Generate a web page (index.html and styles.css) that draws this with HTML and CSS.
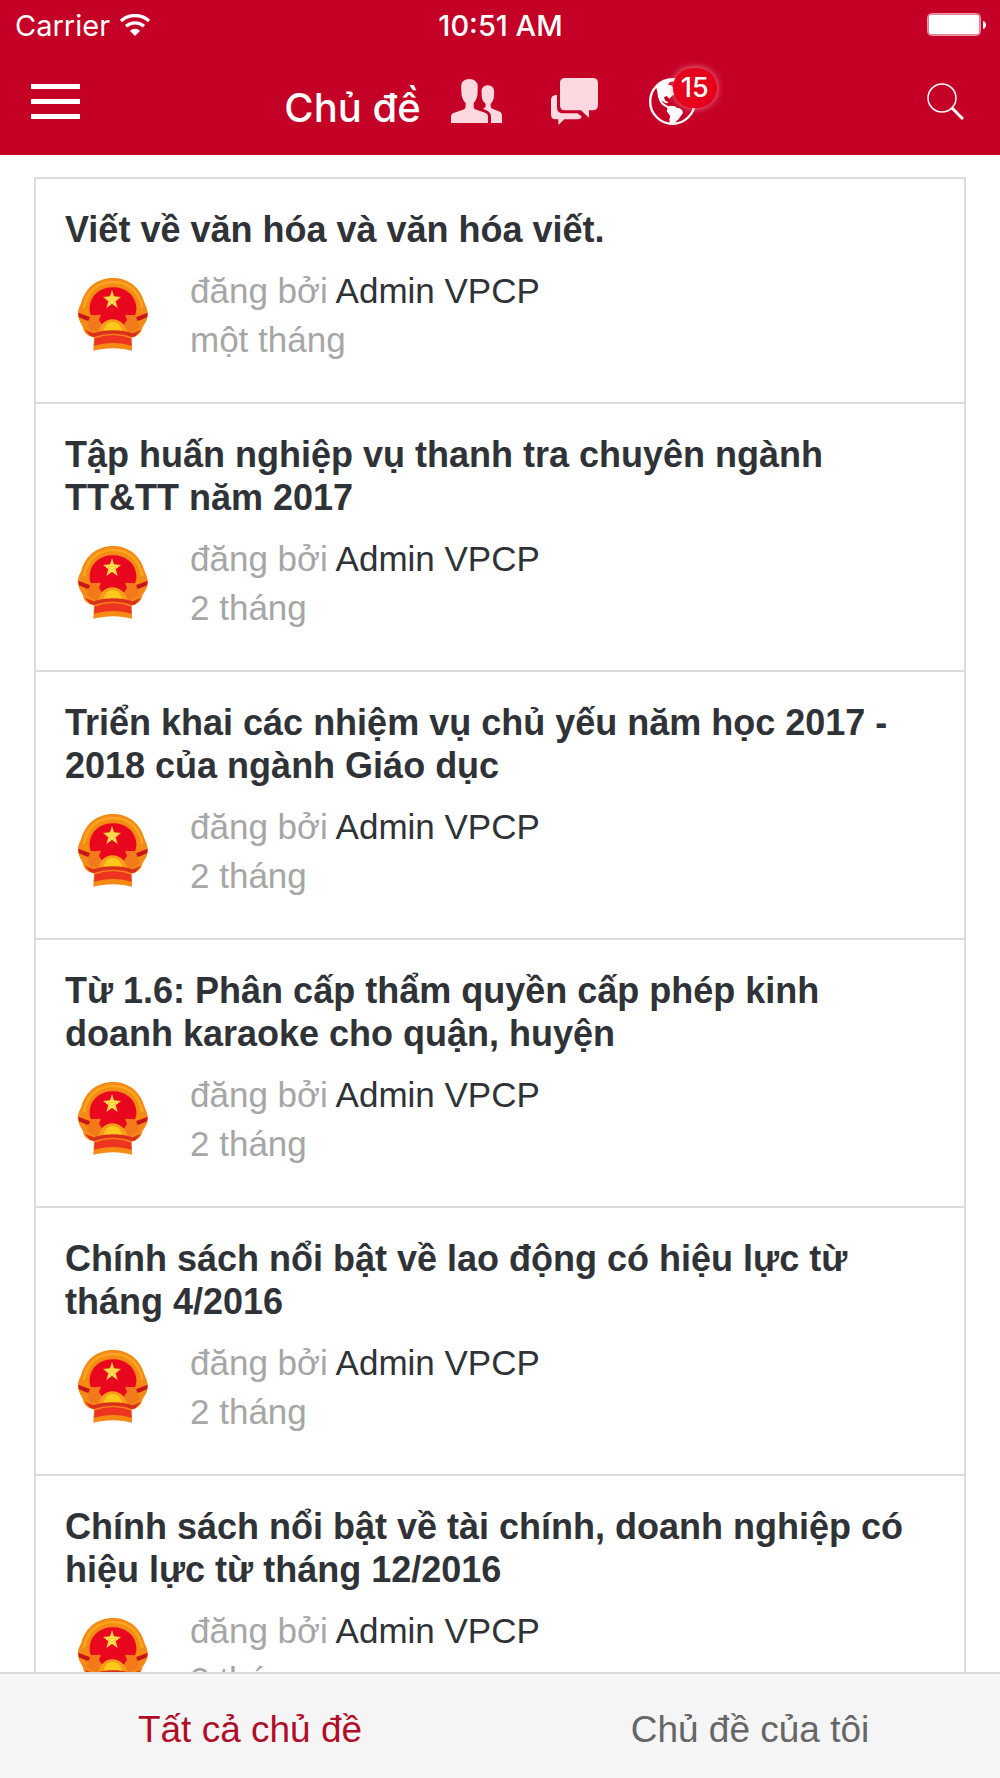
FILE: index.html
```
<!DOCTYPE html>
<html lang="vi">
<head>
    <meta charset="UTF-8">
    <meta name="viewport" content="width=device-width, initial-scale=1.0">
    <title>Chủ đề</title>
    <link rel="stylesheet" href="styles.css">
</head>
<body>

    <!-- Emblem shared by all avatars -->
    <svg width="0" height="0" class="defs" aria-hidden="true">
        <symbol id="emblem" viewBox="18 30 264 288">
            <path fill="#f58a14" d="M162 66C112 66 78 98 67 140C58 156 54 172 58 184C61 198 68 204 72 214C74 230 84 240 105 244L103 284C140 274 184 274 219 284L218 244C238 240 248 230 250 214C256 204 263 196 266 182C268 170 264 156 257 142C246 98 212 66 162 66Z"/>
            <path fill="none" stroke="#f9a51e" stroke-width="8" d="M74 156C84 104 118 78 162 78C206 78 240 104 250 156"/>
            <path fill="#e8071f" d="M162 94C122 94 96 118 92 152C91 162 93 170 96 178L122 180L116 206L208 206L202 180L228 178C231 170 233 162 232 152C228 118 202 94 162 94Z"/>
            <path fill="#c9141c" d="M58 170L94 184L112 180L104 192L84 194L60 184ZM266 170L230 184L212 180L220 192L240 194L264 184Z"/>
            <path fill="#f4791a" d="M94 178L126 176L120 192L130 206L112 232L84 214ZM230 178L198 176L204 192L194 206L212 232L240 214Z"/>
            <path fill="#ffd84a" d="M159 102L165 121L186 123L170 136L176 156L159 144L142 156L148 136L132 123L153 121Z"/>
            <path fill="#f99d18" d="M118 232C122 206 138 190 160 190C184 190 200 206 206 232Z"/>
            <path fill="#ffc81c" d="M134 230C136 208 146 198 160 198C176 198 186 208 190 230Z"/>
            <path fill="#d9301c" d="M78 222L104 232C136 220 188 220 220 232L246 222L228 242L217 243C180 230 142 230 106 243L94 240Z"/>
            <path fill="#ee3420" d="M108 240C142 228 180 228 216 240L218 270C184 258 140 258 105 270Z"/>
            <path fill="none" stroke="#f58a14" stroke-width="4" d="M104 246C142 232 182 232 220 246"/>
        </symbol>
    </svg>

    <header class="header">
        <div class="status-bar">
            <div class="carrier">
                <span>Carrier</span>
                <svg width="30" height="22" viewBox="0 0 90 66" aria-hidden="true">
                    <path fill="none" stroke="#fff" stroke-width="10" d="M3 21C26 -1 64 -1 87 21"/>
                    <path fill="none" stroke="#fff" stroke-width="10" d="M18 37C33 23 57 23 72 37"/>
                    <path fill="#fff" d="M30 51C38 42 52 42 60 51L45 66Z"/>
                </svg>
            </div>
            <div class="time">10:51 AM</div>
            <svg class="battery" width="59" height="24" viewBox="0 0 59 24" aria-hidden="true">
                <rect x="0.5" y="0.5" width="53" height="22" rx="4" fill="none" stroke="#ee9aa9"/>
                <rect x="1.5" y="1.5" width="51" height="20" rx="3" fill="#fff"/>
                <path fill="#fff" d="M56 8C60 9 60 15 56 16Z"/>
            </svg>
        </div>

        <div class="nav-bar">
            <button type="button" class="icon-button menu-button" aria-label="Menu">
                <span></span>
                <span></span>
                <span></span>
            </button>

            <div class="nav-center">
                <h1>Chủ đề</h1>
                <button type="button" class="icon-button people-button" aria-label="Bạn bè">
                    <svg width="51" height="44" viewBox="60 58 153 132">
                        <path fill="#fcd9e1" d="M60 190V172C60 163 66 160 76 157L96 150C102 148 104 144 104 138V130C95 122 91 110 91 94C91 82 89 72 96 65C102 60 107 58 115 58C124 58 130 61 135 66C142 73 140 82 140 94C140 110 136 122 128 130V138C128 144 130 148 136 150L156 157C168 161 171 164 171 172V190Z"/>
                        <path fill="#fcd9e1" d="M180 190V171C180 158 172 154 162 150L156 147C161 145 164 143 164 137V132C155 126 152 116 152 106C152 96 150 89 156 83C160 79 164 77 170 77C177 77 182 79 186 84C191 90 189 97 189 106C189 116 186 126 179 132V138C179 144 181 146 186 148L201 154C210 157 213 160 213 168V190Z"/>
                    </svg>
                </button>
                <button type="button" class="icon-button chat-button" aria-label="Tin nhắn">
                    <svg width="47" height="47" viewBox="360 54 141 141">
                        <path fill="#fcd9e1" d="M404 54H484C496 54 501 59 501 71V134C501 145 496 150 486 151H474V173L450 151H404C392 151 387 146 387 134V71C387 59 392 54 404 54Z"/>
                        <path fill="#fcd9e1" d="M378 105V142C378 154 385 160 397 160H439L451 168C453 174 447 178 438 178H400L382 195V178H374C365 178 360 173 360 164V121C360 110 366 105 378 105Z"/>
                    </svg>
                </button>
                <button type="button" class="icon-button globe-button" aria-label="Thông báo">
                    <svg width="47" height="47" viewBox="655 54 141 141">
                        <circle cx="725.5" cy="124.5" r="67" fill="none" stroke="#fff" stroke-width="7"/>
                        <path fill="#fff" d="M676 80C690 64 706 56 732 56V64L718 66L712 74L722 76L728 84L738 92V104L726 106L716 116L708 108L700 112L703 121L714 128L706 130L692 122L682 112L680 96Z"/>
                        <path fill="none" stroke="#fff" stroke-width="6" d="M686 112C688 130 702 136 716 144"/>
                        <path fill="#fff" d="M712 140C722 134 736 138 740 144C750 144 756 150 757 158L750 169L744 178L735 186L734 193H718L716 178L719 168L708 154Z"/>
                    </svg>
                    <span class="badge">15</span>
                </button>
            </div>

            <button type="button" class="icon-button search-button" aria-label="Tìm kiếm">
                <svg width="37" height="37" viewBox="0 0 37 37">
                    <circle cx="15" cy="15" r="14" fill="none" stroke="#fff" stroke-width="1.5"/>
                    <path stroke="#fff" stroke-width="3" d="M25 25L36 36"/>
                </svg>
            </button>
        </div>
    </header>

    <main class="content">
        <ul class="topic-list">
            <li class="topic">
                <h2>Viết về văn hóa và văn hóa viết.</h2>
                <div class="topic-info">
                    <svg class="avatar" aria-hidden="true"><use href="#emblem"/></svg>
                    <div class="meta">
                        <p>đăng bởi <a href="#">Admin VPCP</a></p>
                        <p>một tháng</p>
                    </div>
                </div>
            </li>
            <li class="topic">
                <h2>Tập huấn nghiệp vụ thanh tra chuyên ngành TT&amp;TT năm 2017</h2>
                <div class="topic-info">
                    <svg class="avatar" aria-hidden="true"><use href="#emblem"/></svg>
                    <div class="meta">
                        <p>đăng bởi <a href="#">Admin VPCP</a></p>
                        <p>2 tháng</p>
                    </div>
                </div>
            </li>
            <li class="topic">
                <h2>Triển khai các nhiệm vụ chủ yếu năm học 2017 - 2018 của ngành Giáo dục</h2>
                <div class="topic-info">
                    <svg class="avatar" aria-hidden="true"><use href="#emblem"/></svg>
                    <div class="meta">
                        <p>đăng bởi <a href="#">Admin VPCP</a></p>
                        <p>2 tháng</p>
                    </div>
                </div>
            </li>
            <li class="topic">
                <h2>Từ 1.6: Phân cấp thẩm quyền cấp phép kinh doanh karaoke cho quận, huyện</h2>
                <div class="topic-info">
                    <svg class="avatar" aria-hidden="true"><use href="#emblem"/></svg>
                    <div class="meta">
                        <p>đăng bởi <a href="#">Admin VPCP</a></p>
                        <p>2 tháng</p>
                    </div>
                </div>
            </li>
            <li class="topic">
                <h2>Chính sách nổi bật về lao động có hiệu lực từ tháng 4/2016</h2>
                <div class="topic-info">
                    <svg class="avatar" aria-hidden="true"><use href="#emblem"/></svg>
                    <div class="meta">
                        <p>đăng bởi <a href="#">Admin VPCP</a></p>
                        <p>2 tháng</p>
                    </div>
                </div>
            </li>
            <li class="topic">
                <h2>Chính sách nổi bật về tài chính, doanh nghiệp có hiệu lực từ tháng 12/2016</h2>
                <div class="topic-info">
                    <svg class="avatar" aria-hidden="true"><use href="#emblem"/></svg>
                    <div class="meta">
                        <p>đăng bởi <a href="#">Admin VPCP</a></p>
                        <p>2 tháng</p>
                    </div>
                </div>
            </li>
        </ul>
    </main>

    <nav class="tabs">
        <a href="#" class="tab active">Tất cả chủ đề</a>
        <a href="#" class="tab">Chủ đề của tôi</a>
    </nav>

</body>
</html>
```

FILE: styles.css
```
* {
    box-sizing: border-box;
}

body {
    display: flex;
    flex-direction: column;
    height: 100vh;
    margin: 0;
    overflow: hidden;
    background-color: #fff;
    color: #2f3236;
    font-family: "Liberation Sans", Arial, sans-serif;
}

h1, h2, p, ul {
    margin: 0;
    padding: 0;
}

a {
    color: inherit;
    text-decoration: none;
}

.defs {
    position: absolute;
}

/* Header */
.header {
    flex: none;
    background-color: #c40026;
    color: #fff;
    font-family: Inter, "Liberation Sans", sans-serif;
}

.status-bar {
    display: grid;
    grid-template-columns: 1fr auto 1fr;
    align-items: center;
    height: 50px;
    padding: 0 14px 0 15px;
    font-size: 29px;
}

.carrier {
    display: flex;
    align-items: center;
    gap: 10px;
}

.time {
    font-weight: 500;
}

.battery {
    justify-self: end;
}

.nav-bar {
    display: flex;
    justify-content: space-between;
    align-items: center;
    height: 105px;
    padding: 0 36px 3px 31px;
}

.icon-button {
    display: flex;
    padding: 0;
    border: none;
    background: none;
    color: #fff;
    font-family: inherit;
    cursor: pointer;
}

.menu-button {
    flex-direction: column;
    gap: 10px;
    width: 49px;
}

.menu-button span {
    height: 5px;
    background-color: #fff;
}

.nav-center {
    display: flex;
    align-items: center;
    padding-right: 27px;
}

h1 {
    padding-top: 14px;
    font-size: 40px;
    font-weight: 500;
    line-height: 48px;
}

.people-button {
    margin-left: 30px;
}

.chat-button {
    margin-left: 49px;
}

.globe-button {
    position: relative;
    margin-left: 51px;
}

.badge {
    position: absolute;
    top: -10px;
    left: 24px;
    width: 44px;
    height: 40px;
    border-radius: 20px;
    background-color: #e5001c;
    box-shadow: 0 0 6px 1px rgba(255, 150, 160, 0.7);
    font-size: 27px;
    font-weight: 500;
    line-height: 40px;
    text-align: center;
}

/* Topic list */
.content {
    flex: 1;
    min-height: 0;
    overflow: hidden;
    padding: 22px 34px 0;
}

.topic-list {
    border: 2px solid #d9dbdc;
    list-style: none;
}

.topic {
    padding: 29px 29px 38px;
    border-bottom: 2px solid #d9dbdc;
}

.topic h2 {
    font-size: 36px;
    line-height: 43px;
}

.topic-info {
    display: flex;
    gap: 37px;
    margin-top: 15px;
}

.avatar {
    width: 88px;
    height: 96px;
}

.meta {
    color: #a6a6a6;
    font-size: 35px;
    line-height: 49px;
}

.meta a {
    color: #2f3236;
}

/* Bottom tabs */
.tabs {
    display: flex;
    flex: none;
    height: 106px;
    border-top: 2px solid #d9dbdc;
    background-color: #f5f5f5;
}

.tab {
    flex: 1;
    color: #666;
    font-size: 37px;
    line-height: 112px;
    text-align: center;
}

.tab.active {
    color: #b00d28;
}
```
